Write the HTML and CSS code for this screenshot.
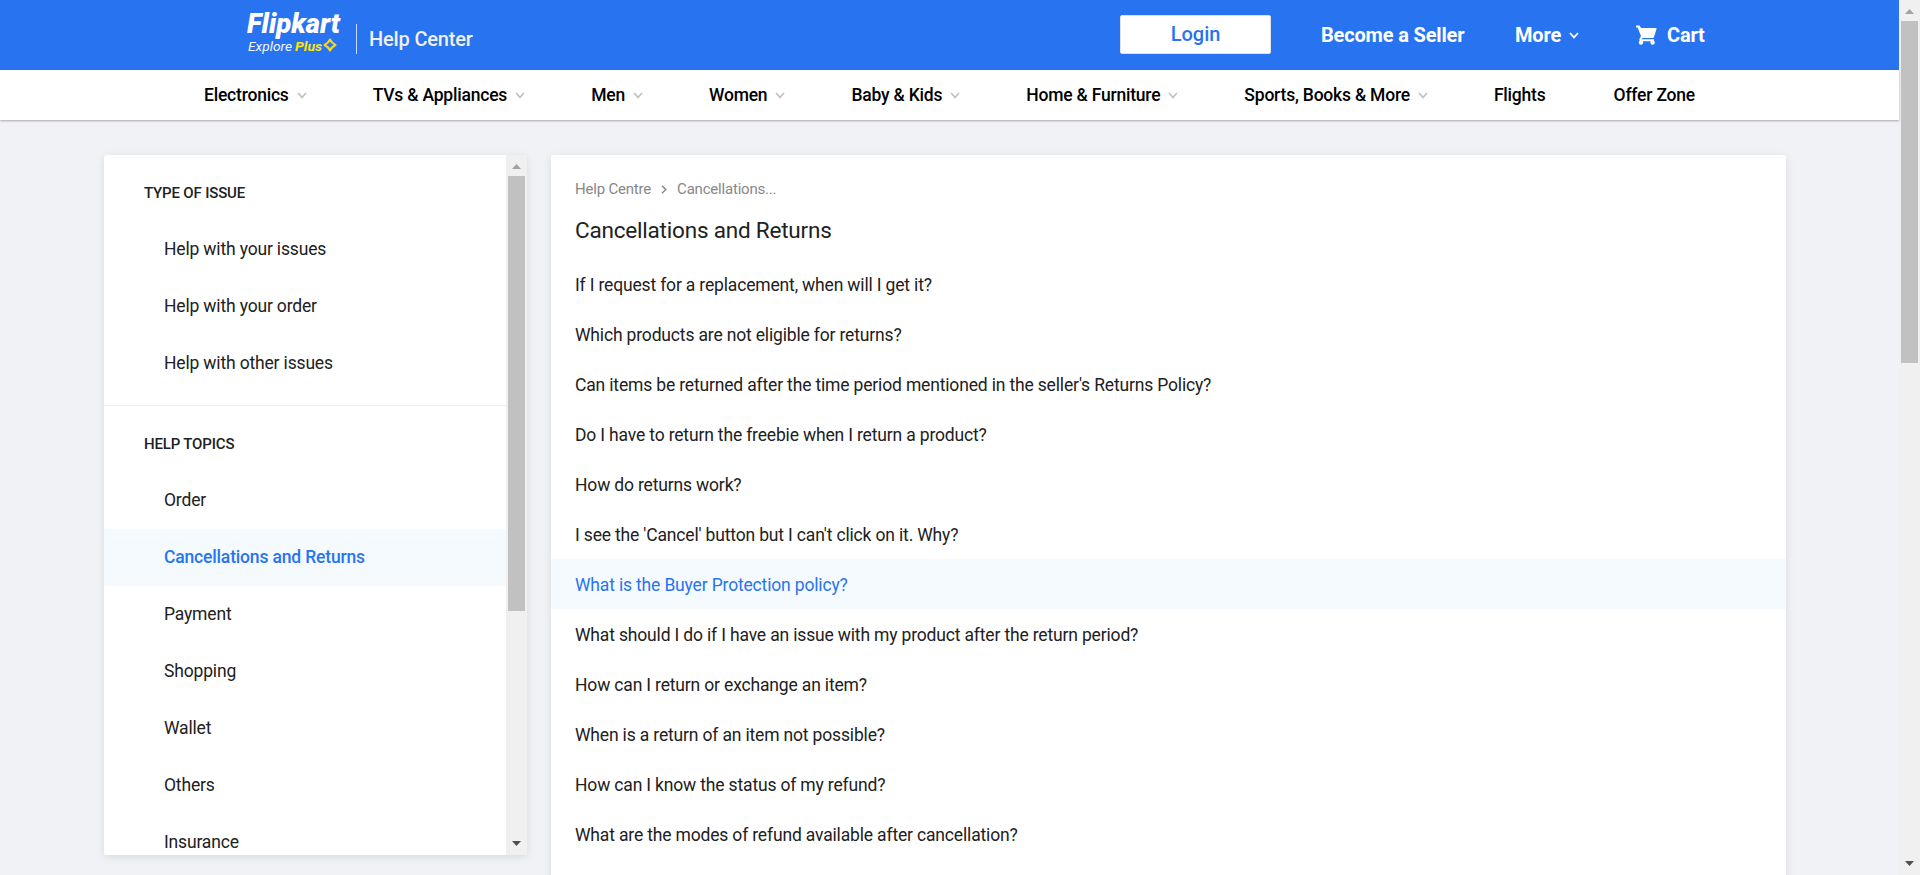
FILE: index.html
```html
<!DOCTYPE html>
<html lang="en">
<head>
<meta charset="utf-8">
<title>Help Center - Cancellations and Returns</title>
<link rel="stylesheet" href="styles.css">
</head>
<body>
<svg class="sprite" width="0" height="0">
  <symbol id="chevron" viewBox="0 0 10 7"><path d="M1 1l4 4.4L9 1" fill="none" stroke="currentColor" stroke-width="1.7"/></symbol>
  <symbol id="arrow-up" viewBox="0 0 9 5"><path d="M4.5 0L9 5H0z" fill="currentColor"/></symbol>
  <symbol id="arrow-down" viewBox="0 0 9 5"><path d="M0 0h9L4.500 5z" fill="currentColor"/></symbol>
</svg>
<div class="window">
  <div class="page">
    <header class="header">
      <svg class="logo" width="98" height="54" viewBox="0 0 98 54">
        <text class="logo-name" x="1" y="27" textLength="93" lengthAdjust="spacingAndGlyphs">Flipkart</text>
        <text class="logo-tag" x="2" y="45" textLength="44" lengthAdjust="spacingAndGlyphs">Explore</text>
        <text class="logo-plus" x="49" y="45" textLength="27" lengthAdjust="spacingAndGlyphs">Plus</text>
        <path d="M84 33.500Q85.500 37 89.500 39Q85.500 41 84 44.500Q82.500 41 78.500 39Q82.500 37 84 33.500z" fill="none" stroke="#f9d423" stroke-width="2" stroke-linejoin="round"/>
      </svg>
      <span class="divider"></span>
      <span class="help-center">Help Center</span>
      <a class="login">Login</a>
      <a class="seller">Become a Seller</a>
      <a class="more">More<svg width="10" height="7"><use href="#chevron"/></svg></a>
      <a class="cart"><svg width="21" height="20" viewBox="0 0 21 20"><path d="M0 .5h3.700l1.300 2.500h15q.8.200.5 1L18 12q-.4.900-1.300.9H6.500L5.600 14.300H18v1.900H4.500q-1.900-.6-1-2.400L5 11 1.600 2.500H0z" fill="#fff"/><circle cx="5" cy="17.500" r="2.200" fill="#fff"/><circle cx="16.600" cy="17.500" r="2.200" fill="#fff"/></svg>Cart</a>
    </header>
    <nav class="nav">
      <a>Electronics<svg width="10" height="7"><use href="#chevron"/></svg></a>
      <a>TVs &amp; Appliances<svg width="10" height="7"><use href="#chevron"/></svg></a>
      <a>Men<svg width="10" height="7"><use href="#chevron"/></svg></a>
      <a>Women<svg width="10" height="7"><use href="#chevron"/></svg></a>
      <a>Baby &amp; Kids<svg width="10" height="7"><use href="#chevron"/></svg></a>
      <a>Home &amp; Furniture<svg width="10" height="7"><use href="#chevron"/></svg></a>
      <a>Sports, Books &amp; More<svg width="10" height="7"><use href="#chevron"/></svg></a>
      <a>Flights</a>
      <a>Offer Zone</a>
    </nav>
    <div class="content">
      <aside class="sidebar">
        <div class="topics">
          <section class="group">
            <h2>TYPE OF ISSUE</h2>
            <a>Help with your issues</a>
            <a>Help with your order</a>
            <a>Help with other issues</a>
          </section>
          <section class="group help-topics">
            <h2>HELP TOPICS</h2>
            <a>Order</a>
            <a class="active">Cancellations and Returns</a>
            <a>Payment</a>
            <a>Shopping</a>
            <a>Wallet</a>
            <a>Others</a>
            <a>Insurance</a>
          </section>
        </div>
        <div class="scrollbar">
          <svg class="up" width="9" height="5"><use href="#arrow-up"/></svg>
          <div class="thumb"></div>
          <svg class="down" width="9" height="5"><use href="#arrow-down"/></svg>
        </div>
      </aside>
      <main class="main">
        <div class="crumbs"><span>Help Centre</span><svg width="6" height="9" viewBox="0 0 6 9"><path d="M1 .7l3.800 3.800L1 8.300" fill="none" stroke="#878787" stroke-width="1.500"/></svg><span>Cancellations...</span></div>
        <h1>Cancellations and Returns</h1>
        <div class="questions">
          <a>If I request for a replacement, when will I get it?</a>
          <a>Which products are not eligible for returns?</a>
          <a>Can items be returned after the time period mentioned in the seller's Returns Policy?</a>
          <a>Do I have to return the freebie when I return a product?</a>
          <a>How do returns work?</a>
          <a>I see the 'Cancel' button but I can't click on it. Why?</a>
          <a class="active">What is the Buyer Protection policy?</a>
          <a>What should I do if I have an issue with my product after the return period?</a>
          <a>How can I return or exchange an item?</a>
          <a>When is a return of an item not possible?</a>
          <a>How can I know the status of my refund?</a>
          <a>What are the modes of refund available after cancellation?</a>
        </div>
      </main>
    </div>
  </div>
  <div class="scrollbar page-scroll">
    <svg class="up" width="9" height="5"><use href="#arrow-up"/></svg>
    <div class="thumb"></div>
    <svg class="down" width="9" height="5"><use href="#arrow-down"/></svg>
  </div>
</div>
</body>
</html>
```
FILE: styles.css
```css
* { box-sizing: border-box; }
body { margin: 0; overflow: hidden; font-family: Roboto, Arial, sans-serif; font-size: 17.5px; letter-spacing: -.165px; color: #212121; }
h1, h2 { margin: 0; font-weight: 400; }
svg { flex: none; }
.sprite { display: none; }
.window { display: flex; width: 1920px; height: 875px; overflow: hidden; }
.page { flex: 1; min-width: 0; background: #f1f2f6; }

.header { display: flex; align-items: center; height: 70px; padding-left: 246px; background: #2874f0; color: #fff; font-size: 20px; font-weight: 500; white-space: nowrap; }
.logo { margin-bottom: 4px; letter-spacing: 0; }
.logo-name { font: italic 900 27px Roboto, sans-serif; fill: #fff; }
.logo-tag { font: italic 400 13.5px Roboto, sans-serif; fill: #f0f5ff; }
.logo-plus { font: italic 700 13.5px Roboto, sans-serif; fill: #ffe500; }
.divider { width: 1px; height: 30px; margin: 8px 12px 0; background: #c8dcfb; }
.help-center { width: 751px; padding-top: 8px; color: #f0f0f0; }
.login { width: 151px; height: 39px; margin-bottom: 1px; border: 1px solid #e0e0e0; border-radius: 2px; background: #fff; color: #2874f0; line-height: 37px; letter-spacing: 0; text-align: center; }
.seller { width: 194px; margin-left: 50px; font-weight: 700; }
.more { display: flex; align-items: center; gap: 8px; width: 121px; font-weight: 700; }
.cart { display: flex; align-items: center; gap: 10px; font-weight: 700; }

.nav { position: relative; display: flex; gap: 66px; height: 50px; padding-left: 204px; background: #fff; box-shadow: 0 1px 2px rgba(0, 0, 0, .3); color: #000; font-weight: 500; letter-spacing: -.205px; white-space: nowrap; }
.nav a { display: flex; align-items: center; gap: 8px; }
.nav a:last-child { margin-left: 2px; }
.nav svg { color: #c2c2c2; }

.content { display: flex; align-items: flex-start; gap: 24px; padding: 35px 0 0 104px; }
.sidebar { display: flex; width: 423px; height: 700px; overflow: hidden; border-radius: 2px; background: #fff; box-shadow: 0 2px 8px rgba(0, 0, 0, .1); }
.topics { flex: 1; height: 700px; overflow: hidden; }
.group { padding-bottom: 14px; border-bottom: 1px solid #f0f0f0; }
.group h2 { height: 65px; padding: 28px 0 0 40px; font-size: 15px; line-height: 20px; font-weight: 500; }
.group a { display: block; height: 57px; padding-left: 60px; line-height: 58px; }
.help-topics h2 { height: 66px; }
.help-topics a { line-height: 56px; }
.group .active { background: #f5faff; color: #2874f0; font-weight: 500; }

.main { width: 1235px; height: 740px; border-radius: 2px; background: #fff; box-shadow: 0 2px 8px rgba(0, 0, 0, .1); }
.crumbs { display: flex; align-items: center; gap: 10px; height: 20px; margin: 24px 24px 0; color: #878787; font-size: 15px; letter-spacing: -.2px; }
.main h1 { margin: 16px 24px 0; font-size: 22.5px; line-height: 30px; letter-spacing: -.2px; }
.questions { padding-top: 14px; }
.questions a { display: block; height: 50px; padding-left: 24px; line-height: 52px; }
.questions .active { background: #f5faff; color: #2874f0; }

.scrollbar { display: flex; flex: none; flex-direction: column; align-items: center; width: 21px; height: 100%; padding: 9px 0; background: #f0f0f0; }
.up { color: #a3a3a3; }
.down { margin-top: auto; color: #505050; }
.thumb { width: 17px; height: 435px; margin-top: 7px; background: #c1c1c1; }
.page-scroll .thumb { height: 342px; }
```
